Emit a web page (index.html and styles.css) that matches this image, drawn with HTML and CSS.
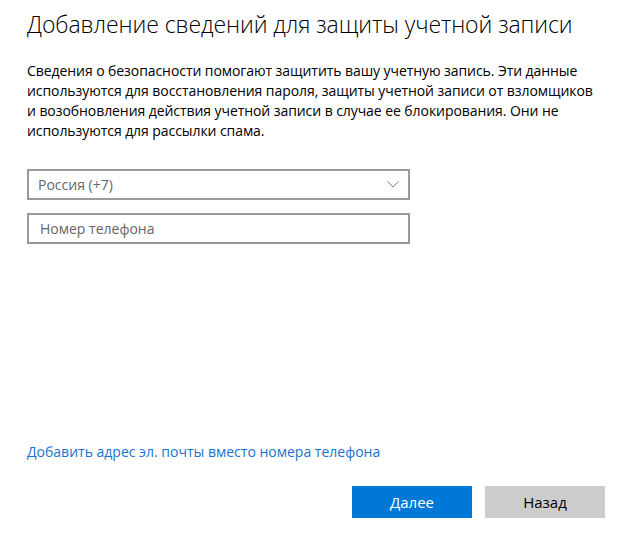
FILE: index.html
```html
<!DOCTYPE html>
<html lang="ru">
<head>
<meta charset="utf-8">
<title>Добавление сведений для защиты учетной записи</title>
<link rel="stylesheet" href="styles.css">
</head>
<body>
<div class="page">
  <h1 class="title">Добавление сведений для защиты учетной записи</h1>
  <p class="desc">Сведения о безопасности помогают защитить вашу учетную запись. Эти данные используются для восстановления пароля, защиты учетной записи от взломщиков и возобновления действия учетной записи в случае ее блокирования. Они не используются для рассылки спама.</p>
  <div class="fields">
    <div class="select">
      <span class="select-text">Россия (+7)</span>
      <svg class="chevron" width="12" height="7" viewBox="0 0 12 7"><path d="M0.5 0.5 L6 6 L11.5 0.5" fill="none" stroke="#7a7a7a" stroke-width="1"/></svg>
    </div>
    <div class="input"><span class="placeholder">Номер телефона</span></div>
  </div>
  <div class="spacer"></div>
  <a class="link" href="#">Добавить адрес эл. почты вместо номера телефона</a>
  <div class="actions">
    <button class="btn btn-primary">Далее</button>
    <button class="btn btn-secondary">Назад</button>
  </div>
</div>
</body>
</html>
```
FILE: styles.css
```css
html, body {
  margin: 0;
  padding: 0;
  background: #fff;
}
.page {
  width: 636px;
  height: 536px;
  box-sizing: border-box;
  padding: 8px 31px 18px 27px;
  display: flex;
  flex-direction: column;
  font-family: "Open Sans", "Noto Sans", sans-serif;
  color: #000;
}
.title {
  margin: 0;
  font-size: 23px;
  font-weight: 300;
  line-height: 32px;
  letter-spacing: -0.08px;
  white-space: nowrap;
}
.desc {
  margin: 21px 0 0 0;
  width: 576px;
  font-size: 14px;
  line-height: 20px;
  letter-spacing: -0.07px;
}
.fields {
  margin-top: 28px;
  display: flex;
  flex-direction: column;
  gap: 13px;
}
.select, .input {
  width: 383px;
  height: 31px;
  box-sizing: border-box;
  border: 2px solid #999;
  display: flex;
  align-items: center;
  padding: 0 8px 0 9px;
  font-size: 14px;
  color: #666;
}
.select {
  justify-content: space-between;
}
.input {
  padding-left: 11px;
}
.chevron {
  margin-right: 1px;
}
.spacer {
  flex: 1;
}
.link {
  font-size: 14px;
  line-height: 20px;
  color: #1a73d0;
  text-decoration: none;
  letter-spacing: 0;
  align-self: flex-start;
}
.actions {
  margin-top: 24px;
  display: flex;
  justify-content: flex-end;
  gap: 13px;
}
.btn {
  width: 120px;
  height: 32px;
  border: none;
  font-family: inherit;
  font-size: 15px;
  padding: 0;
}
.btn-primary {
  background: #0078d7;
  color: #fff;
}
.btn-secondary {
  background: #ccc;
  color: #000;
}
```
